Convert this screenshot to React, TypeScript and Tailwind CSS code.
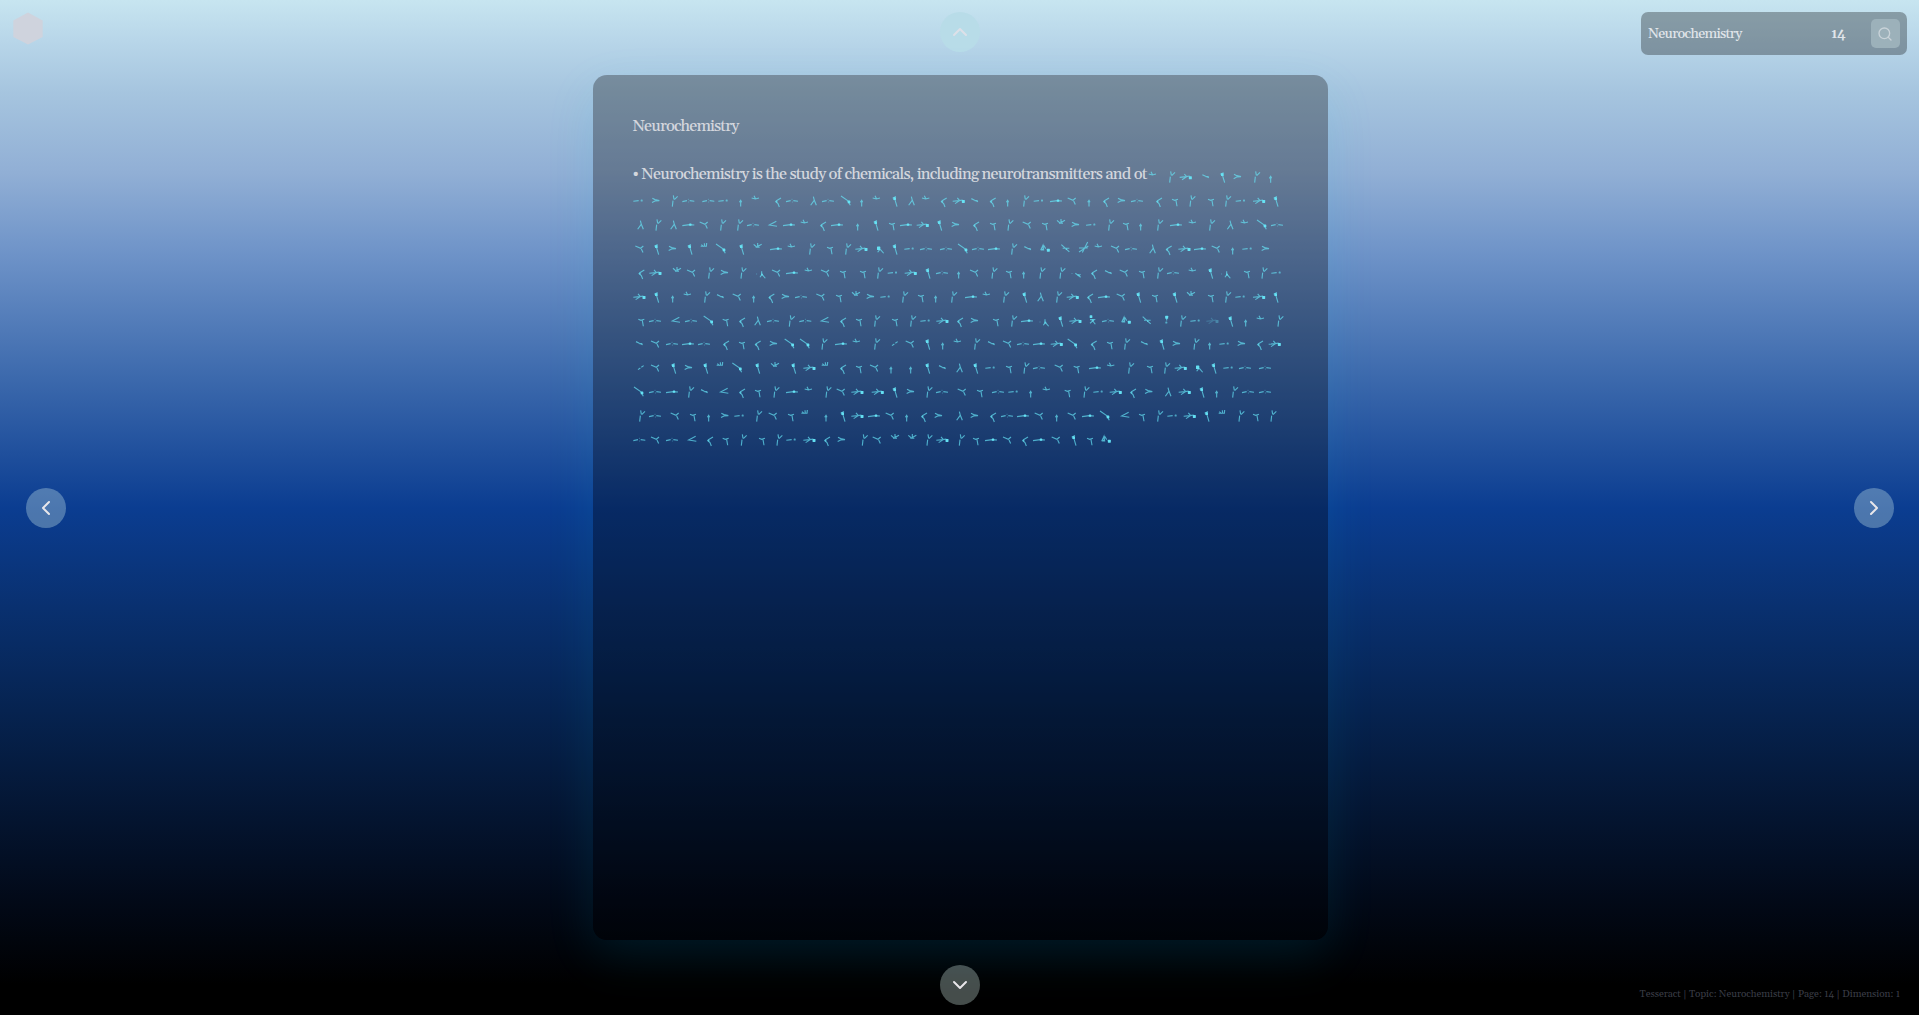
import { ChevronUp, ChevronDown, ChevronLeft, ChevronRight, Search } from 'lucide-react';

type Glyph = { d: string; dots?: [number, number, number][] };

// Symbols of the cipher script, drawn around the origin in thirds of a pixel.
const GLYPHS: Record<string, Glyph> = {
  a: { d: 'M-14 2L2 0', dots: [[11, 0, 6]] },
  t: { d: 'M-18 3L-4 0M4 0L18 2', dots: [[0, -4, 3], [1, 4, 3]] },
  h: { d: 'M-18 3L4 0L18 1', dots: [[6, 0, 7]] },
  '>': { d: 'M-10 -7L-2 -3L11 0L-2 1L-11 6' },
  '<': { d: 'M10 -10L-11 1L12 5' },
  k: { d: 'M9 -8L-6 1M-8 2L0 9L4 19', dots: [[-4, 3, 5]] },
  y: { d: 'M0 -12L3 -1L9 14M2 0L-8 14' },
  d: { d: 'M-16 -14L4 0L12 14', dots: [[8, 4, 8]] },
  i: { d: 'M0 0V18M-4 5L0 -1L3 5' },
  v: { d: 'M-11 -8L0 -5L11 -8M-4 -15L1 -5' },
  q: { d: 'M-7 -7L3 -12M0 -2L6 18', dots: [[-1, -6, 8]] },
  r: { d: 'M-18 2L2 0L12 -2M-11 9L3 0M-4 -8L3 0', dots: [[14, 3, 9]] },
  n: { d: 'M-12 -8L4 -1L12 -8M6 1L11 12' },
  T: { d: 'M-9 -4L-1 -1L9 -4M3 0L6 17' },
  w: { d: 'M-12 -13L-3 -5L12 -13M0 -17V-5M-6 -4H6' },
  u: { d: 'M-9 -7H9M-7 -12L0 -6M2 -16L3 -6M9 -17L8 -6' },
  s: { d: 'M-10 -6L0 -1L10 3M0 0H9' },
  p: { d: 'M-4 0L-6 18M-3 -16L-1 -4M10 -13L0 -3' },
  x: { d: 'M2 2L12 14M-6 11L0 3', dots: [[-3, -1, 10]] },
  b: { d: 'M0 -4V7L-5 14M1 5L11 17', dots: [[-15, 4, 3], [1, 6, 6]] },
  f: { d: 'M-4 2L12 14M11 4L7 11', dots: [[-14, 3, 3], [5, 7, 5]] },
  m: { d: 'M-11 5L-4 -10L-2 4H-11M-2 -10L4 0', dots: [[12, 5, 9], [-6, 2, 5]] },
  j: { d: 'M-12 -12L12 10M-8 -1L12 -1', dots: [[3, 2, 4]] },
  X: { d: 'M-14 10L14 -8M12 -20L-4 12M-14 -2H12' },
  g: { d: 'M-6 -3H7L-6 8M3 2L10 11', dots: [[-3, -12, 8], [2, 0, 6]] },
  '!': { d: 'M0 -8V0', dots: [[0, -10, 9], [-1, 6, 6]] },
  c: { d: 'M-9 6L-2 1M1 -1L8 -6' },
};

const FIRST_ROW = 'v1561 p1619 r1661 s1721 q1772 >1816 p1874 i1916';

const ROWS = [
  'a18 >71 p127 t169 t229 a273 i326 v370 k438 t480 y544 t588 d643 i689 v733 q789 y838 v881 k935 r980 s1028 k1082 i1127 p1181 a1219 h1272 n1319 i1371 k1422 >1468 t1515 k1581 T1629 p1680 T1737 p1787 a1825 r1881 q1932',
  'y25 p78 y124 h169 n215 p272 p323 t363 <423 h471 v517 k573 h615 i677 q732 T780 h822 r872 q923 >970 k1032 T1083 p1134 n1184 T1239 w1287 >1330 a1376 p1436 T1482 i1526 p1583 h1632 v1681 p1739 y1794 v1837 d1891 t1935',
  'n22 q74 >121 q174 u215 d268 q329 w377 h432 v478 p539 T594 p647 r688 x743 q789 a831 t882 t942 d994 t1038 h1086 p1145 s1187 m1237 j1300 X1355 v1399 n1449 t1497 y1561 k1610 r1657 h1704 n1751 i1802 a1845 >1900',
  'k28 r70 w135 n177 p236 >277 p333 b389 n432 h480 v529 n579 T633 T693 p743 a781 r836 q888 t930 i980 n1026 p1086 T1131 i1175 p1230 p1290 f1334 k1386 s1429 n1475 T1530 p1583 t1623 v1681 q1736 b1784 T1845 p1896 a1932',
  'r22 q74 i122 v166 p224 s265 n314 i365 k418 >460 t507 n565 T621 w672 >715 a759 p818 T867 i911 p965 h1017 v1063 p1121 q1178 y1225 p1280 r1322 k1374 h1416 n1466 q1520 T1569 q1629 w1677 T1737 p1787 a1824 r1881 q1932',
  'T28 t69 <132 t177 d231 T281 k330 y376 t423 p478 t520 <579 k633 T681 p734 T789 p842 a879 r931 k984 >1027 T1092 p1145 h1185 b1239 q1286 r1330 g1380 t1428 m1480 j1544 !1604 p1652 a1689 R1741 q1796 i1841 v1885 p1944',
  's22 n69 t120 h168 t216 k282 T330 k377 >424 d474 d520 p576 h627 v673 p734 c789 n833 q887 i932 v976 p1034 s1078 n1125 t1173 h1221 r1274 d1323 k1385 T1434 p1484 s1537 q1590 >1633 p1692 i1733 a1776 >1828 k1884 r1928',
  'c27 n69 q125 >169 q221 u263 d317 q377 w429 q485 r532 u578 k633 T681 n726 i777 i836 q887 s931 y982 q1031 a1074 T1131 p1182 t1221 n1280 T1334 h1389 v1436 p1496 T1554 p1604 r1646 x1700 q1746 a1788 t1839 t1899',
  'd22 t69 h120 p176 s217 <277 k330 T378 p432 h480 v529 p588 n626 r676 r737 q789 >835 p891 t930 n989 T1044 t1098 a1143 i1196 v1243 T1307 p1362 a1398 r1451 k1503 >1550 y1608 r1658 q1710 i1754 p1808 t1848 t1899',
  'p29 t69 n128 T183 i230 >278 a321 p380 n422 T477 u517 i582 q633 r676 h726 n773 i824 k876 >919 y982 >1027 k1083 t1125 h1173 n1220 i1274 n1319 h1368 d1420 <1480 T1530 p1583 a1620 r1673 q1725 u1769 p1827 T1872 p1923',
  't22 n69 t120 <181 k234 T281 p334 T390 p441 a477 r532 k585 >628 p697 n734 w789 w841 p891 r931 p988 T1032 h1077 n1125 k1179 h1221 n1271 q1326 T1374 m1420',
];

function CipherLine({ row, from, className }: { row: string; from: number; className: string }) {
  const span = 1968 - from;
  return (
    <svg
      viewBox={`${from} 0 ${span} 72`}
      preserveAspectRatio="none"
      className={className}
      fill="none"
      aria-hidden="true"
    >
      {row.split(' ').map((token) => {
        const faint = token[0] === 'R';
        const glyph = GLYPHS[faint ? 'r' : token[0]];
        return (
          <g key={token} transform={`translate(${token.slice(1)} 41)`} opacity={faint ? 0.35 : 1}>
            <path d={glyph.d} stroke="#67e8f9" strokeWidth="3.4" strokeOpacity="0.68" />
            {glyph.dots?.map(([x, y, size]) => (
              <rect
                key={x}
                x={x - size / 2}
                y={y - size / 2}
                width={size}
                height={size}
                rx="1.5"
                fill="#67e8f9"
                fillOpacity={size < 7 ? 0.6 : 0.95}
              />
            ))}
          </g>
        );
      })}
    </svg>
  );
}

const round = 'flex size-10 shrink-0 items-center justify-center rounded-full';

export default function App() {
  return (
    <div className="relative flex h-screen w-full flex-col overflow-hidden bg-[linear-gradient(to_bottom,#c7e5f0_0%,#b8d6e9_4%,#a6c5df_9%,#91afd5_17%,#6e93c8_25%,#3d6aad_37%,#0b3d91_50%,#09306f_60%,#062350_70%,#04142f_81%,#020917_89%,#000000_97%)] font-[Gelasio,Georgia,serif] text-[#d3d6dd]">
      <header className="flex h-[75px] shrink-0 items-start justify-between pl-[13px] pr-3 pt-3">
        <div className="w-[266px]">
          <svg viewBox="0 0 30 33" className="h-[33px] w-[30px]" aria-hidden="true">
            <path d="M15 0.5L29.7 8.5V25L15 32.5L0.3 25V8.5Z" fill="#cfd3dd" />
          </svg>
        </div>
        <button className={`${round} bg-[#b8dce8] text-[#dde0e8]`}>
          <ChevronUp size={24} />
        </button>
        <div className="flex h-[43px] w-[266px] items-center rounded-[7px] bg-black/30 pl-[7px] pr-[7px] text-[#e0e5ea]">
          <span className="w-[183px] pt-px text-[14px] font-medium tracking-[-0.7px]">Neurochemistry</span>
          <span className="pt-px text-[14px] font-semibold tracking-[-0.6px]">14</span>
          <button className="ml-auto flex size-[29px] items-center justify-center rounded-[5px] bg-[#9cb1ba] pr-px text-[#c9d3d9]">
            <Search size={16} strokeWidth={2} />
          </button>
        </div>
      </header>

      <main className="flex h-[865px] shrink-0 items-center justify-between pl-[26px] pr-[25px]">
        <button className={`${round} bg-[#e6fff6]/30 text-[#e8e6ea]`}>
          <ChevronLeft size={24} />
        </button>
        <article className="h-full w-[735px] rounded-[14px] bg-black/30 px-10 pt-[39px] text-[16px] leading-6 shadow-[0_16px_50px_rgba(0,200,240,0.11)]">
          <h1 className="mb-6 font-medium tracking-[-0.87px]">Neurochemistry</h1>
          <div className="mb-px flex h-6">
            <p className="w-[514px] shrink-0 whitespace-nowrap font-medium tracking-[-0.77px]">
              • Neurochemistry is the study of chemicals, including neurotransmitters and ot
            </p>
            <CipherLine row={FIRST_ROW} from={1545} className="mt-px h-6 w-[141px] shrink-0" />
          </div>
          {ROWS.map((row) => (
            <CipherLine key={row} row={row} from={3} className="block h-[23.92px] w-[655px]" />
          ))}
        </article>
        <button className={`${round} bg-[#e6fff6]/30 text-[#e8e6ea]`}>
          <ChevronRight size={24} />
        </button>
      </main>

      <footer className="flex flex-1 items-start justify-between pr-[19px] pt-[25px]">
        <div className="w-[262px] pl-3" />
        <button className={`${round} ml-5 bg-[#e6fffa]/30 text-[#e8e6ea]`}>
          <ChevronDown size={24} />
        </button>
        <p className="w-[262px] whitespace-nowrap pt-[21px] text-right text-[10px] leading-4 tracking-[-0.06px] text-[#3a3d46]">
          Tesseract | Topic: Neurochemistry | Page: 14 | Dimension: 1
        </p>
      </footer>
    </div>
  );
}
